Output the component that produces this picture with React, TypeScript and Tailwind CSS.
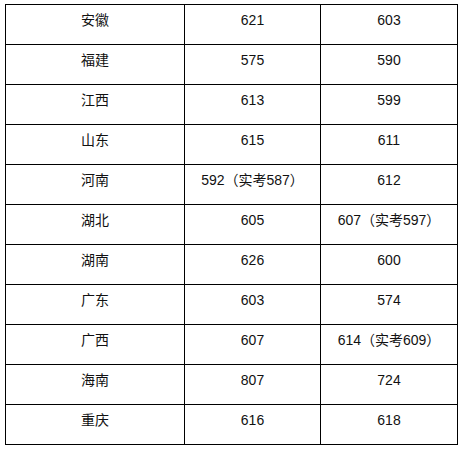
const rows: [string, string, string][] = [
  ["安徽", "621", "603"],
  ["福建", "575", "590"],
  ["江西", "613", "599"],
  ["山东", "615", "611"],
  ["河南", "592（实考587）", "612"],
  ["湖北", "605", "607（实考597）"],
  ["湖南", "626", "600"],
  ["广东", "603", "574"],
  ["广西", "607", "614（实考609）"],
  ["海南", "807", "724"],
  ["重庆", "616", "618"],
];

export default function App() {
  return (
    <div className="w-[462px] h-[450px] bg-white pt-[4px] pl-[5px] overflow-hidden">
      <div
        className="grid grid-cols-[179px_136px_137px] w-[453px] border-l border-t border-black text-[14px] text-[#111]"
        style={{ fontFamily: '"Liberation Sans", "Noto Sans CJK SC", sans-serif' }}
      >
        {rows.map((r, i) =>
          r.map((cell, j) => (
            <div
              key={`${i}-${j}`}
              className="h-[40px] border-r border-b border-black text-center leading-5 pt-[5px]"
            >
              {cell}
            </div>
          ))
        )}
      </div>
    </div>
  );
}
